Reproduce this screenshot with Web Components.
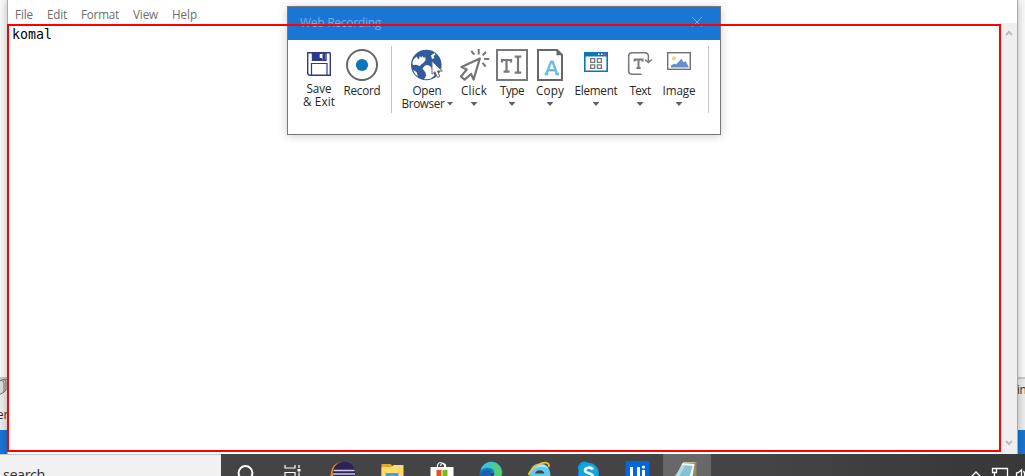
<!DOCTYPE html>
<html lang="en"><head><meta charset="utf-8"><title>Web Recording</title>
<style>
html,body{margin:0;width:1025px;height:476px;overflow:hidden;background:#fff;font:12px "Open Sans","Noto Sans",sans-serif}
</style></head><body><desk-top></desk-top>
<script>
const make=(name,html,after)=>customElements.define(name,class extends HTMLElement{
  constructor(){super();this.attachShadow({mode:'open'}).innerHTML=html;}
  connectedCallback(){if(after)after(this);}
});

// A line of text whose tracking is adjusted to a given width.
make('ui-text','<style>:host{display:block;white-space:nowrap}span{display:inline-block}</style><span><slot></slot></span>',el=>{
  const s=el.shadowRoot.querySelector('span'),w=+el.getAttribute('w');
  const n=el.textContent.length;
  if(w&&n){s.style.letterSpacing=((w-s.getBoundingClientRect().width)/n)+'px';}
});

const icons={
save:['301 47 36 36',`<g fill="none" stroke="#2b3990" stroke-width="1.400"><path d="M307.700 52.700h22l.6.6v22h-21l-1.600-1.600z"/><path d="M311.500 75v-11.500h15.500V75" stroke-width="1.200"/><path d="M312.500 53v7.300h13.500v-7.300"/></g><path fill="#2b3990" d="M313 52h9v8h-9z"/><path fill="#fff" d="M319.700 54h2.600v4h-2.600z"/><path fill="#2b3990" d="M322.500 52h2.500v8h-2.500z"/>`],
record:['344 47 36 36',`<circle cx="362" cy="65" r="15" fill="#fff" stroke="#666" stroke-width="2"/><circle cx="362" cy="65" r="6.100" fill="#0b75c2"/>`],
globe:['409 47 36 36',`<circle cx="426.300" cy="65" r="15.300" fill="#325b99"/><path fill="#fff" d="M412.500 62.500l1.300-3.500 3-2.500 1.200 2.500 1.200-.3.500-2.700 1.500 1.500 1.500-1.500 1 2 1.500-1 .5 3-2.500 3-2 1.500-1.500 1.500-3.500-1.200-3.500.2zM422.500 68.500l2.500-3 3-.5 2.500 1.500 3 5 1 4-4.500 3.500-6 .2 2-3.200-.5-3.500zM413 70l3.500 2 1.500 4.500-3-2.500z"/><path fill="#fff" d="M431 55.500l3.500-2.500 1 1.500-2 1.500 1 2-2.500 1z"/><path fill="#fff" stroke="#6a6a6a" stroke-width="1" d="M432 61.200v13l2.900-2.500 2.600 5.800 2.400-1.100-2.500-5.400h5z"/>`],
click:['456 47 36 36',`<g fill="none" stroke="#737477" stroke-width="2"><path stroke-width="2.200" stroke-linejoin="round" d="M479.800 58.500l-18.300 8.600 5.200 2.500-5.700 6.900 3.600 3.200 6.500-5.700 2.500 5.500z"/><path d="M471.300 51l3 3.600M478.700 49v5.500M486 52l-3.300 3.200M484.200 59h5M482.500 62.800l3.200 3.700"/></g>`],
type:['494 47 36 36',`<rect x="497" y="50" width="30" height="30" fill="#fff" stroke="#77787c" stroke-width="2"/><path fill="none" stroke="#77787c" stroke-width="2.200" d="M502 62.500v-2.500h9v2.500M506.500 60v12M503.600 71.700h6M514.700 56.700h6.600M518 57v15.500M514.700 72.700h6.600"/>`],
copy:['532 47 36 36',`<path fill="#fff" stroke="#66676a" stroke-width="2" d="M538 50h19l5 5v25h-24z"/><path fill="#66676a" d="M556.500 49v6.200h6.500z"/><path fill="none" stroke="#70b9e5" stroke-width="2.400" d="M546.200 74l5-12.400h1.400l4.400 12.400M548 70.200h8M544.700 74h3.600M555.300 74h3.700"/>`],
element:['578 47 36 36',`<path fill="#fff" stroke="#0b75b8" stroke-width="1.600" d="M584.800 52.800h22.400v18.400h-22.400z"/><path fill="#0b75b8" d="M584 52h24v4.500h-24z"/><g fill="#fff" stroke="#77787a" stroke-width="1.300"><path d="M590.700 58.700h4v3.600h-4zM597.400 58.700h4v3.600h-4zM590.700 64.800h4v3.600h-4zM597.400 64.800h4v3.600h-4z"/></g><path fill="#fff" d="M598 53.500h1.500v1.500h-1.500zM601 53.500h1.500v1.500h-1.500z"/><circle cx="604.800" cy="54.300" r="1.300" fill="#ed3a4b"/>`],
text:['622 47 36 36',`<g fill="none" stroke="#77787a" stroke-width="1.500"><path d="M641.500 74.200h-9.800q-3-.3-3-3v-15.500q.3-3 3-3h13.500q3 .3 3.200 3v5.500M645 59.500l3.400 3 3.500-3"/><path stroke-width="2" d="M634.700 61.500v-2h7.800v2M638.500 59v8.800M636.400 68h4.200"/></g>`],
image:['661 47 36 36',`<rect x="667.700" y="52.700" width="22.600" height="16.600" fill="#fff" stroke="#707174" stroke-width="1.400"/><circle cx="674" cy="58.500" r="2" fill="#eed574"/><path fill="#648fc8" d="M671 67.500v-2l3.500-2 1.500 1 5.500-5.800 2 3.500 2-1 3 5v1.300z"/>`]
};
// One ribbon button: icon, caption lines and an optional drop-down mark.
make('ribbon-tool',`<style>:host{display:flex;flex-direction:column;align-items:center;flex:none;height:74px;color:#262626;line-height:13px;font-size:11.700px}
svg{display:block;flex:none}.cap{margin-top:var(--cap,1px);display:flex;flex-direction:column;align-items:center}
.arrow{display:none;width:7px;height:4px;background:#626262;clip-path:polygon(0 0,100% 0,50% 100%);margin-top:5px}
:host([drop]) .arrow{display:block}</style><svg width="36" height="36"></svg><div class="cap"><slot></slot></div><i class="arrow"></i>`,el=>{
  const s=el.shadowRoot.querySelector('svg'),i=icons[el.getAttribute('icon')];
  s.setAttribute('viewBox',i[0]);s.innerHTML=i[1];el.style.width=el.getAttribute('size')+'px';
});

make('recording-dialog',`<style>:host{display:block;box-sizing:border-box;width:434px;height:129px;border:1px solid #777;background:#fff;box-shadow:0 1px 9px #0003}
header{height:33px;background:#1976d4;display:flex;justify-content:space-between;padding:0 17px 0 12px;box-sizing:border-box;color:#72aee9}
header ui-text{line-height:16px;margin-top:8px}header svg{margin-top:9px}
main{display:flex;padding:7px 0 0 12px}hr{flex:none;width:1px;height:67px;border:0;margin:-1px 5px 0;background:#c4c4c4}
.pair{display:flex;align-items:center;gap:2px;margin-left:1px}.pair i{width:7px;height:4px;background:#626262;clip-path:polygon(0 0,100% 0,50% 100%)}</style>
<header><ui-text w="81">Web Recording</ui-text><svg width="12" height="12"><path d="M1 1l10 10M11 1L1 11" stroke="#72aee9"/></svg></header>
<main><ribbon-tool icon="save" size="38" style="--cap:-1px"><ui-text w="25">Save</ui-text><ui-text w="32">&amp; Exit</ui-text></ribbon-tool>
<ribbon-tool icon="record" size="48"><ui-text w="37">Record</ui-text></ribbon-tool><hr>
<ribbon-tool icon="globe" size="60"><ui-text w="29">Open</ui-text><div class="pair"><ui-text w="43">Browser</ui-text><i></i></div></ribbon-tool>
<ribbon-tool icon="click" size="34" drop><ui-text w="26">Click</ui-text></ribbon-tool>
<ribbon-tool icon="type" size="42" drop><ui-text w="24">Type</ui-text></ribbon-tool>
<ribbon-tool icon="copy" size="34" drop><ui-text w="28">Copy</ui-text></ribbon-tool>
<ribbon-tool icon="element" size="58" drop><ui-text w="43">Element</ui-text></ribbon-tool>
<ribbon-tool icon="text" size="30" drop><ui-text w="21">Text</ui-text></ribbon-tool>
<ribbon-tool icon="image" size="48" drop><ui-text w="33">Image</ui-text></ribbon-tool><hr></main>`);

make('note-pad',`<style>:host{display:flex;flex-direction:column;box-sizing:border-box;width:1011px;height:454px;background:#fff;border:solid #aaa;border-width:0 1px;box-shadow:0 0 9px #0004}
nav{height:23px;display:flex;gap:14px;padding-left:7px;color:#6d6d6d;font-size:11.700px;line-height:16px;box-sizing:border-box;padding-top:6px}
.body{flex:1;display:flex}.page{flex:1;padding:4px 0 0 4px;font:13.300px/15px "DejaVu Sans Mono",monospace;color:#000}
aside{width:17px;background:#efefef;display:flex;flex-direction:column;justify-content:space-between;align-items:center;padding:7px 0 8px;box-sizing:border-box}</style>
<nav><ui-text w="18">File</ui-text><ui-text w="20">Edit</ui-text><ui-text w="38">Format</ui-text><ui-text w="25">View</ui-text><ui-text w="25">Help</ui-text></nav>
<div class="body"><div class="page"><ui-text w="40">komal</ui-text></div><aside><svg width="8" height="7"><path d="M1 5l3-3 3 3" fill="none" stroke="#bcbcbc" stroke-width="2"/></svg><svg width="8" height="7"><path d="M1 2l3 3 3-3" fill="none" stroke="#bcbcbc" stroke-width="2"/></svg></aside></div>`);

// The window behind, of which only its left and right edges are visible.
make('back-window',`<style>:host{display:flex;flex-direction:column;width:1025px;height:454px;background:#fafafa}
.top{height:379px;border-bottom:2px solid #c8c8c8;box-sizing:border-box}.mid{height:51px;background:#eee;display:flex;justify-content:space-between;color:#333;font-size:11.700px;line-height:16px}
.left svg{display:block}.left ui-text{margin:4px 0 0 -3px}.right{margin:2px 0 0;width:8px}.blue{height:24px;background:#1976d4}</style>
<div class="top"></div><div class="mid"><div class="left"><svg width="8" height="23" fill="#ddd" stroke="#777"><path d="M-4 4l5-3 3 2v10l-5 3M0 2l3-2 3 2v9l-3 3M3 1l3-1 3 2v10"/></svg><ui-text w="11">er</ui-text></div><div class="right"><ui-text w="9">in</ui-text></div></div><div class="blue"></div>`);

const task={
ring:`<circle cx="25" cy="20" r="6.900" fill="none" stroke="#fff" stroke-width="2"/>`,
view:`<g fill="none" stroke="#fff" stroke-width="1.200"><path d="M15.500 12v3h10v-3M15.500 24v-4.500h10v4.500M29.500 12v3M29.500 19.500v4"/></g><path fill="#fff" d="M28 16h3v2.500h-3z"/>`,
eclipse:`<path fill="#f59421" d="M26 9c-9-1-14 5-14 15h10z"/><circle cx="25.500" cy="20" r="11.300" fill="#2c2255"/><path stroke="#cfc9e5" stroke-width="1.600" d="M15 17.500h21M14.500 21h22"/>`,
folder:`<path fill="#e4a72b" d="M14 11h9l2 2v11H14z"/><path fill="#ffda6c" d="M14 14h10l2-2h10v12H14z"/><path fill="#4b9ed5" d="M18 20h13v4H18z"/>`,
store:`<path fill="none" stroke="#fff" stroke-width="1.200" d="M21 14v-2q2-5 7 0v2M24 13q1-5 5-1v3"/><path fill="#fff" d="M14 14h23v9H14z"/><path fill="#e94e26" d="M20 17h5v6h-5z"/><path fill="#7db91b" d="M26 17h5v6h-5z"/>`,
edge:`<path fill="#157fca" d="M14 24c0-12 8-18 17-14 6 3 7 9 5 14z"/><path fill="#39c7cc" d="M15 17c4-10 16-11 20-2 2 5 1 8-1 9h-7q4-8-3-9-4-1-9 2z"/><path fill="#55cf72" d="M30 10c6 3 8 10 5 14h-6q3-7-3-10z"/><path fill="#1762a8" d="M14 24c0-6 7-9 12-6l-3 6z"/><path fill="#444" d="M25 20h4l-1 3h-3z"/>`,
ie:`<path fill="#5ec9f2" d="M15 24c0-9 4-13.500 10.500-13.500s10.500 4.500 10.500 13.500z"/><path fill="#b5e9fb" d="M18 17c2-6 12-8 16-1-4-3-11-3-16 1z"/><path fill="#444" d="M20.500 20.500c1-4.500 8.500-4.500 9.500 0z"/><path fill="none" stroke="#f4c332" stroke-width="1.800" d="M14 22c3-8 16-15 20-11q1 1 0 3"/>`,
skype:`<circle cx="21" cy="15" r="6.500" fill="#0a9ddc"/><circle cx="25" cy="20" r="10.300" fill="#0fa6e2"/><path fill="none" stroke="#fff" stroke-width="2.600" d="M29.500 16.500c-2-3-8-2-8 1s8 2.500 8 6"/>`,
uipath:`<path fill="#0067df" d="M13 8h24v15H13z"/><path fill="none" stroke="#fff" stroke-width="3" d="M19 14v10M26 14v10M31 17v7"/><circle cx="31" cy="14" r="1.600" fill="#fff"/>`,
notepad:`<path fill="#9c8a59" d="M22 9h13v15h-3z"/><path fill="#f2f7f8" d="M21 10l12 1-2 13H14z"/><path fill="#85c4ce" d="M21 12l10 1-3 11H13z"/><path fill="#b2dbe2" d="M21 12l3 .3L17 24h-4z"/><path stroke="#eee" stroke-dasharray="1 1" d="M22 9.500h12"/>`
};
make('task-icon',`<style>:host{display:block;flex:none;width:49px;height:22px}:host([active]){background:#686868;width:48px}svg{display:block}</style><svg width="49" height="22" viewBox="1.500 1 49 22"></svg>`,el=>{
  el.shadowRoot.querySelector('svg').innerHTML=task[el.getAttribute('icon')];
});
make('task-bar',`<style>:host{display:flex;box-sizing:border-box;width:1025px;height:22px;background:linear-gradient(90deg,#444 75%,#393939 94%);overflow:hidden}
.search{flex:none;width:221px;margin-right:1px;box-sizing:border-box;border-top:1px solid #c7c7c7;background:#f1f1f1;color:#333;font-size:14.500px;line-height:20px;padding:10px 0 0 3px}.tray{margin-left:auto;width:56px}</style>
<div class="search"><ui-text w="42">search</ui-text></div>
<task-icon icon="ring"></task-icon><task-icon icon="view"></task-icon><task-icon icon="eclipse"></task-icon><task-icon icon="folder"></task-icon><task-icon icon="store"></task-icon><task-icon icon="edge"></task-icon><task-icon icon="ie"></task-icon><task-icon icon="skype"></task-icon><task-icon icon="uipath"></task-icon><task-icon icon="notepad" active></task-icon>
<svg class="tray" width="56" height="22" viewBox="969 454 56 22" fill="none" stroke="#fff" stroke-width="1.300"><path d="M971 477l5-5 5 5M997 468.500h10.500v8M992.500 468.500h4v4h-4zM994.500 473v4M1016.500 476v-3l2-.5 3-2.500v6M1023.500 471q1.500 2 1 5"/></svg>`);

make('desk-top',`<style>:host{display:block;position:relative;width:1025px;height:476px;overflow:hidden}
back-window,note-pad,recording-dialog,.mark,task-bar{position:absolute}
back-window{left:0;top:0}note-pad{left:7px;top:0}recording-dialog{left:287px;top:6px}task-bar{left:0;top:454px}
.mark{left:7px;top:24px;width:994px;height:428px;box-sizing:border-box;border:2px solid #f00}</style>
<back-window></back-window><note-pad></note-pad><recording-dialog></recording-dialog><div class="mark"></div><task-bar></task-bar>`);
</script></body></html>
